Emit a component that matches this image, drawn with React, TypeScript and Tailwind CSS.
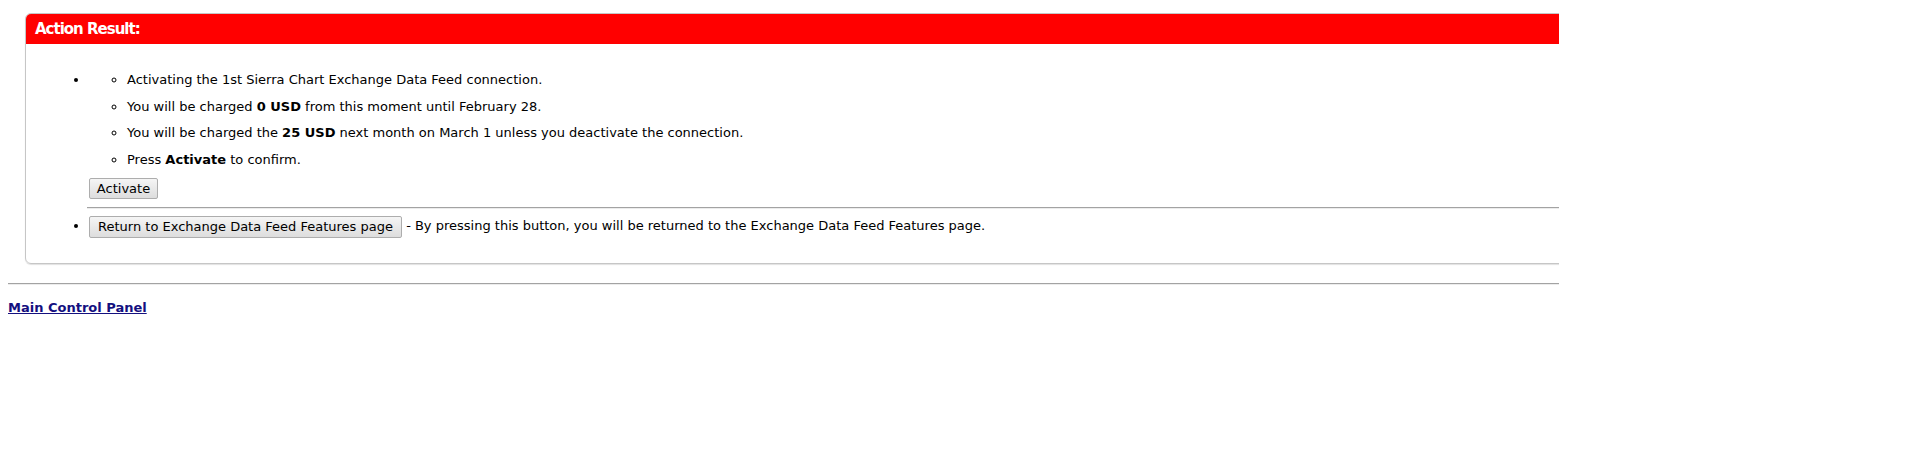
// Action result page: red titled panel with nested bullet list, then footer link
const FONT = "font-['DejaVu_Sans',Verdana,sans-serif]";

const BTN =
  'inline-flex items-center justify-center align-middle rounded-[2px] border border-[#adadad] bg-gradient-to-b from-[#f5f5f5] to-[#dddddd] text-[13px] leading-none text-black';

const steps: { before: string; bold?: string; after?: string }[] = [
  { before: 'Activating the 1st Sierra Chart Exchange Data Feed connection.' },
  { before: 'You will be charged ', bold: '0 USD', after: ' from this moment until February 28.' },
  { before: 'You will be charged the ', bold: '25 USD', after: ' next month on March 1 unless you deactivate the connection.' },
  { before: 'Press ', bold: 'Activate', after: ' to confirm.' },
];

export default function App() {
  return (
    <div className={`h-[451px] w-[1559px] overflow-hidden bg-white pl-2 pt-2 text-[13px] text-black ${FONT}`}>
      <div className="ml-[17px] mt-[5px] w-[1600px] rounded-[6px] border border-[#c6c6c6] shadow-[0_1px_1px_rgba(0,0,0,0.12)]">
        <div className="flex h-[30px] items-center rounded-t-[5px] bg-[#ff0000] px-[9px] text-[15px] font-bold tracking-[-1px] text-white">
          Action Result:
        </div>

        <div className="pb-[25px] pl-[23px] pt-[23px]">
          <ul className="list-disc pl-10">
            <li>
              <ul className="list-[circle] pl-[38px]">
                {steps.map((s, i) => (
                  <li key={i} className="py-[5px] leading-[16.5px]">
                    {s.before}
                    {s.bold && <b>{s.bold}</b>}
                    {s.after}
                  </li>
                ))}
              </ul>
              <button className={`${BTN} mt-[5px] h-[21px] w-[69px]`}>Activate</button>
              <hr className="-ml-[2px] mt-[8px] border-0 border-b border-t border-b-[#ececec] border-t-[#a3a3a3]" />
            </li>
            <li className="mt-[6px] leading-[22px]">
              <button className={`${BTN} h-[22px] w-[313px]`}>Return to Exchange Data Feed Features page</button>
              <span> - By pressing this button, you will be returned to the Exchange Data Feed Features page.</span>
            </li>
          </ul>
        </div>
      </div>

      <hr className="mt-[19px] border-0 border-b border-t border-b-[#ececec] border-t-[#a3a3a3]" />

      <a href="#" className="mt-[15px] block w-fit font-bold leading-4 text-[#14107f] underline">
        Main Control Panel
      </a>
    </div>
  );
}
